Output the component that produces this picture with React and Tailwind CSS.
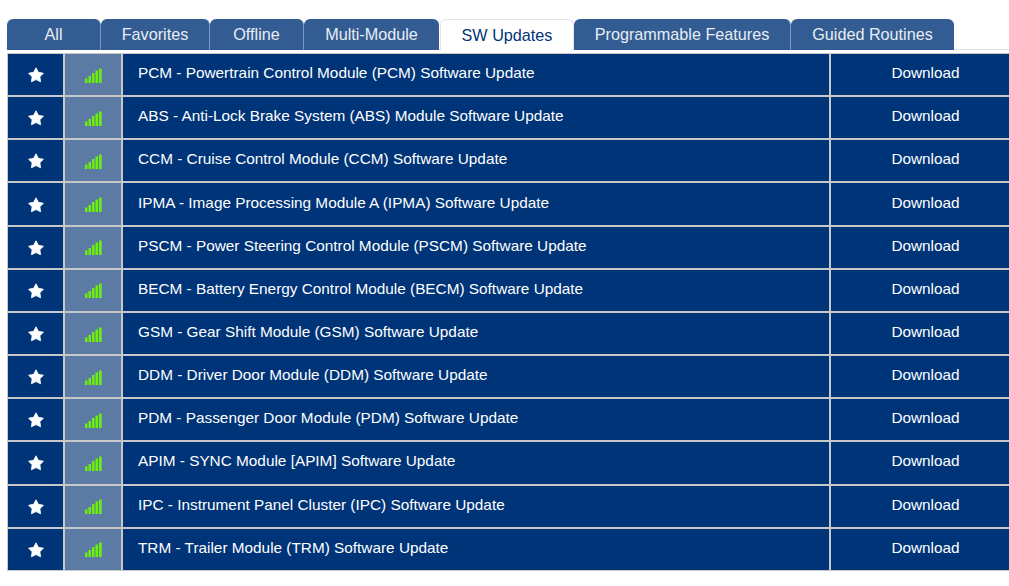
const tabs = [
  { label: 'All', width: 'w-[94px]', divider: true },
  { label: 'Favorites', width: 'w-[109px]', divider: true },
  { label: 'Offline', width: 'w-[94px]', divider: true },
  { label: 'Multi-Module', width: 'w-[135px] mr-px' },
  { label: 'SW Updates', width: 'w-[134px]', active: true },
  { label: 'Programmable Features', width: 'w-[217px]', divider: true },
  { label: 'Guided Routines', width: 'w-[163px]' },
];

const modules = [
  'PCM - Powertrain Control Module (PCM) Software Update',
  'ABS - Anti-Lock Brake System (ABS) Module Software Update',
  'CCM - Cruise Control Module (CCM) Software Update',
  'IPMA - Image Processing Module A (IPMA) Software Update',
  'PSCM - Power Steering Control Module (PSCM) Software Update',
  'BECM - Battery Energy Control Module (BECM) Software Update',
  'GSM - Gear Shift Module (GSM) Software Update',
  'DDM - Driver Door Module (DDM) Software Update',
  'PDM - Passenger Door Module (PDM) Software Update',
  'APIM - SYNC Module [APIM] Software Update',
  'IPC - Instrument Panel Cluster (IPC) Software Update',
  'TRM - Trailer Module (TRM) Software Update',
];

function Star() {
  return (
    <svg width="16" height="16" viewBox="0 0 16 16" className="mt-[1px]">
      <path
        d="M8 .8l2.4 4.5 5 .9-3.5 3.6.7 5L8 12.6l-4.6 2.2.7-5L.6 6.2l5-.9z"
        fill="#fff"
        stroke="#fff"
        strokeWidth="0.8"
        strokeLinejoin="round"
      />
    </svg>
  );
}

function Signal() {
  return (
    <svg width="17" height="15" viewBox="0 0 17 15" className="mt-[1px]" fill="#6cf00a">
      <rect x="0" y="10.5" width="2.5" height="4.5" />
      <rect x="3.5" y="8" width="2.5" height="7" />
      <rect x="7" y="5" width="2.5" height="10" />
      <rect x="10.5" y="2.5" width="2.5" height="12.5" />
      <rect x="14" y="0.5" width="2.7" height="14.5" />
    </svg>
  );
}

export default function App() {
  return (
    <div className="h-[586px] w-full overflow-hidden bg-white pl-[7px] pt-[19px] font-['Liberation_Sans',Arial,sans-serif]">
      {/* Tabs */}
      <div className="flex h-[31px] border-b border-[#e4e4e4]">
        {tabs.map((tab) => (
          <div
            key={tab.label}
            className={`flex h-[31px] shrink-0 items-center justify-center rounded-t-[6px] text-[16.2px] ${tab.width} ${
              tab.active
                ? 'border border-b-0 border-[#e4e4e4] bg-white text-[#003478]'
                : 'bg-[#335c92] text-[#e8edf4]'
            } ${tab.divider ? 'border-r border-[#7d99bf]' : ''}`}
          >
            {tab.label}
          </div>
        ))}
      </div>

      {/* Module list */}
      <div className="mt-[3px] w-[1014px] border-t border-[#c8c8c8]">
        {modules.map((name, i) => (
          <div
            key={name}
            className={`grid grid-cols-[55px_56px_706px_1fr] gap-x-[2px] border-[#c8c8c8] bg-[#c8c8c8] pl-px ${
              i === modules.length - 1 ? 'h-[42.17px] border-b' : 'h-[43.17px] border-b-2'
            }`}
          >
            <div className="flex items-center justify-center bg-[#003478]">
              <Star />
            </div>
            <div className="flex items-center justify-center bg-[#5b7ba5]">
              <Signal />
            </div>
            <div className="flex items-center bg-[#003478] pb-[4px] pl-[15px] text-[15.35px] text-white">
              {name}
            </div>
            <div className="flex items-center justify-center bg-[#003478] pb-[4px] pr-[1px] text-[15.35px] text-white">
              Download
            </div>
          </div>
        ))}
      </div>
    </div>
  );
}
